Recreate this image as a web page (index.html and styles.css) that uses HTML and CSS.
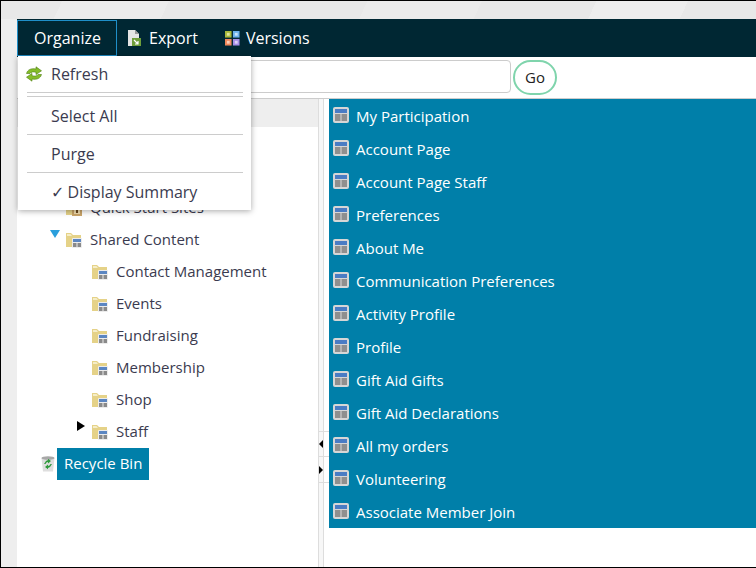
FILE: index.html
```html
<!DOCTYPE html>
<html lang="en">
<head>
    <meta charset="UTF-8">
    <title>Organize</title>
    <link rel="stylesheet" href="styles.css">
</head>
<body>
    <svg class="defs" width="0" height="0">
        <symbol id="page" viewBox="0 0 16 16">
            <rect x="0" y="0" width="16" height="16" rx="2" fill="#d6d6d6"/>
            <rect x="2" y="2" width="12" height="4" fill="#4a7cc4"/>
            <rect x="2" y="7" width="5.500" height="7" fill="#8f8f8f"/>
            <rect x="8.500" y="7" width="5.500" height="7" fill="#8f8f8f"/>
        </symbol>
        <symbol id="folder" viewBox="0 0 16 16">
            <path d="M0 1h5l2 2h8v12H0z" fill="#e5d288"/>
            <path d="M1 2h3.500L6 4H1z" fill="#f5edc8"/>
            <rect x="6" y="6" width="10" height="10" rx="1" fill="#ececec"/>
            <rect x="7" y="7" width="8" height="3" fill="#5b86c2"/>
            <rect x="7" y="11" width="3.500" height="4" fill="#8a8a8a"/>
            <rect x="11.500" y="11" width="3.500" height="4" fill="#8a8a8a"/>
        </symbol>
    </svg>

    <div class="app">
        <div class="top-strip"></div>
        <div class="toolbar">
            <div class="tool tool-active">Organize</div>
            <div class="tool tool-export">
                <svg class="icon-export" viewBox="0 0 13 16">
                    <path d="M0 0h7l4 4v12H0z" fill="#e4e4e4"/>
                    <path d="M7 0l4 4H7z" fill="#9a9a9a"/>
                    <rect x="4" y="8" width="9" height="8" fill="#6f9e3a"/>
                    <path d="M6 10l4 4M10 11v3H7" stroke="#fff" stroke-width="1.200" fill="none"/>
                </svg>
                Export
            </div>
            <div class="tool tool-versions">
                <svg class="icon-versions" viewBox="0 0 16 16">
                    <rect x="0" y="0" width="7" height="7" fill="#a8b83a"/>
                    <rect x="2" y="2" width="3" height="3" fill="#dde5a0"/>
                    <rect x="8.500" y="0" width="7" height="7" fill="#6db2ee"/>
                    <rect x="10.500" y="2" width="3" height="3" fill="#c6e2fa"/>
                    <rect x="0" y="8.500" width="7" height="7" fill="#f0875a"/>
                    <rect x="2" y="10.500" width="3" height="3" fill="#fbd0b8"/>
                    <rect x="8.500" y="8.500" width="7" height="7" fill="#a68ee8"/>
                    <rect x="10.500" y="10.500" width="3" height="3" fill="#dcd2f8"/>
                </svg>
                Versions
            </div>
        </div>

        <div class="search-bar">
            <input class="search-input" type="text">
            <button class="go-btn">Go</button>
        </div>

        <div class="panels">
            <div class="tree">
                <div class="tree-head"></div>
                <div class="tree-body">
                    <div class="tree-row level-1">
                        <svg class="folder" viewBox="0 0 16 16">
                            <path d="M0 1h5l2 2h8v12H0z" fill="#e5d288"/>
                            <rect x="6" y="6" width="10" height="10" fill="#c9a468"/>
                            <rect x="8" y="8" width="6" height="6" fill="#f0dcae"/>
                            <rect x="10" y="9" width="2" height="4" fill="#6b4a1e"/>
                        </svg>
                        Quick Start Sites
                    </div>
                    <div class="tree-row level-1">
                        <span class="arrow-open"></span>
                        <svg class="folder"><use href="#folder"/></svg>
                        Shared Content
                    </div>
                    <div class="tree-row level-2"><svg class="folder"><use href="#folder"/></svg>Contact Management</div>
                    <div class="tree-row level-2"><svg class="folder"><use href="#folder"/></svg>Events</div>
                    <div class="tree-row level-2"><svg class="folder"><use href="#folder"/></svg>Fundraising</div>
                    <div class="tree-row level-2"><svg class="folder"><use href="#folder"/></svg>Membership</div>
                    <div class="tree-row level-2"><svg class="folder"><use href="#folder"/></svg>Shop</div>
                    <div class="tree-row level-2">
                        <span class="arrow-closed"></span>
                        <svg class="folder"><use href="#folder"/></svg>
                        Staff
                    </div>
                    <div class="recycle-row">
                        <svg class="bin" viewBox="0 0 14 16">
                            <path d="M0.500 2h13l-1.500 13.500H2z" fill="#dedede"/>
                            <ellipse cx="7" cy="2" rx="6.500" ry="1.800" fill="#a8a8a8"/>
                            <path d="M3 8L5 5 7 4 7 2.800 10 5 7 7.500 7 6 5.500 6.500 4.500 8z" fill="#2f9a3c"/>
                            <path d="M11 8L9 11 7 12 7 13.200 4 11 7 8.500 7 10 8.500 9.500 9.500 8z" fill="#2f9a3c"/>
                        </svg>
                        <span class="recycle-label">Recycle Bin</span>
                    </div>
                </div>
            </div>

            <div class="splitter">
                <div class="split-cell"><span class="split-left"></span></div>
                <div class="split-cell"><span class="split-right"></span></div>
            </div>

            <div class="list-wrap">
                <div class="list">
                    <div class="list-row"><svg class="page-icon"><use href="#page"/></svg>My Participation</div>
                    <div class="list-row"><svg class="page-icon"><use href="#page"/></svg>Account Page</div>
                    <div class="list-row"><svg class="page-icon"><use href="#page"/></svg>Account Page Staff</div>
                    <div class="list-row"><svg class="page-icon"><use href="#page"/></svg>Preferences</div>
                    <div class="list-row"><svg class="page-icon"><use href="#page"/></svg>About Me</div>
                    <div class="list-row"><svg class="page-icon"><use href="#page"/></svg>Communication Preferences</div>
                    <div class="list-row"><svg class="page-icon"><use href="#page"/></svg>Activity Profile</div>
                    <div class="list-row"><svg class="page-icon"><use href="#page"/></svg>Profile</div>
                    <div class="list-row"><svg class="page-icon"><use href="#page"/></svg>Gift Aid Gifts</div>
                    <div class="list-row"><svg class="page-icon"><use href="#page"/></svg>Gift Aid Declarations</div>
                    <div class="list-row"><svg class="page-icon"><use href="#page"/></svg>All my orders</div>
                    <div class="list-row"><svg class="page-icon"><use href="#page"/></svg>Volunteering</div>
                    <div class="list-row"><svg class="page-icon"><use href="#page"/></svg>Associate Member Join</div>
                </div>
            </div>
        </div>

        <div class="menu">
            <div class="menu-item menu-item-first">
                <svg class="refresh" viewBox="0 0 16 16">
                    <path d="M0.500 7.500C1.500 3.500 5.500 2 10 3L10 .8 15.500 4.800 10 8.600 10 6.300C7 5.500 5 6 4 7.500z" fill="#84bc28" stroke="#4d7d12" stroke-width=".6"/>
                    <path d="M15.500 8.500C14.500 12.500 10.500 14 6 13L6 15.200 .5 11.200 6 7.400 6 9.700C9 10.500 11 10 12 8.500z" fill="#84bc28" stroke="#4d7d12" stroke-width=".6"/>
                </svg>
                Refresh
            </div>
            <div class="menu-sep menu-sep-double"></div>
            <div class="menu-item">Select All</div>
            <div class="menu-sep"></div>
            <div class="menu-item">Purge</div>
            <div class="menu-sep"></div>
            <div class="menu-item"><span class="check">✓</span> Display Summary</div>
        </div>
    </div>
</body>
</html>
```

FILE: styles.css
```css
* {
    box-sizing: border-box;
}
html, body {
    margin: 0;
    height: 100%;
}
body {
    font-family: "Open Sans", sans-serif;
    font-size: 15px;
    color: #3b3b4f;
    overflow: hidden;
}
.defs {
    position: absolute;
}
.app {
    position: relative;
    height: 568px;
    padding-left: 16px;
    border: solid #000;
    border-width: 1px 0 1px 1px;
    background-color: #eee;
    display: flex;
    flex-direction: column;
}
.top-strip {
    height: 18px;
    margin-left: -16px;
    background-color: #e8e8e8;
    background-image:
        linear-gradient(115deg, transparent 8%, #ececec 8%, #ececec 22%, transparent 22%),
        linear-gradient(115deg, transparent 48%, #ebebeb 48%, #ebebeb 63%, transparent 63%),
        linear-gradient(115deg, transparent 78%, #ededed 78%, #ededed 90%, transparent 90%);
}
.toolbar {
    height: 38px;
    background-color: #002733;
    display: flex;
    color: #fff;
    font-size: 16px;
}
.tool {
    display: flex;
    align-items: center;
}
.tool-active {
    width: 100px;
    padding: 0 16px;
    border: 1px solid #1f8fc9;
    margin-top: 1px;
    height: 36px;
}
.tool-export {
    padding: 0 13px 0 11px;
    gap: 8px;
}
.tool-versions {
    padding-left: 14px;
    gap: 6px;
}
.icon-export {
    width: 13px;
    height: 16px;
}
.icon-versions {
    width: 15px;
    height: 15px;
}
.search-bar {
    height: 42px;
    background-color: #fff;
    border-bottom: 1px solid #ccc;
    display: flex;
    align-items: center;
    padding-left: 2px;
    gap: 2px;
}
.search-input {
    width: 492px;
    height: 33px;
    border: 1px solid #ccc;
    border-radius: 4px;
    margin-top: -3px;
}
.go-btn {
    width: 44px;
    height: 35px;
    border: 2px solid #7fd4ac;
    border-radius: 18px;
    background-color: #fff;
    color: #222;
    font-family: inherit;
    font-size: 15px;
    padding: 0;
    margin-top: -1px;
}
.panels {
    flex: 1;
    display: flex;
    background-color: #fff;
    min-height: 0;
}
.tree {
    width: 301px;
}
.tree-head {
    height: 28px;
    background-color: #eee;
}
.tree-body {
    padding-top: 64px;
}
.tree-row {
    height: 32px;
    display: flex;
    align-items: center;
    position: relative;
}
.level-1 {
    padding-left: 49px;
}
.level-2 {
    padding-left: 75px;
}
.folder {
    width: 16px;
    height: 16px;
    margin-right: 8px;
    margin-top: 2px;
}
.arrow-open {
    position: absolute;
    left: 33px;
    top: 7px;
    border-left: 5px solid transparent;
    border-right: 5px solid transparent;
    border-top: 8px solid #2a9fdc;
}
.arrow-closed {
    position: absolute;
    left: 60px;
    top: 6px;
    border-top: 5px solid transparent;
    border-bottom: 5px solid transparent;
    border-left: 8px solid #000;
}
.recycle-row {
    height: 32px;
    display: flex;
    align-items: center;
    padding-left: 24px;
    margin-top: 1px;
}
.bin {
    width: 14px;
    height: 16px;
    margin-right: 2px;
}
.recycle-label {
    height: 32px;
    line-height: 31px;
    padding: 0 7px;
    background-color: #007fa9;
    color: #fff;
}
.splitter {
    width: 11px;
    background: linear-gradient(to right, #ddd 1px, #f7f7f7 1px, #f7f7f7 5px, #ddd 5px, #ddd 6px, #fff 6px);
    padding-top: 332px;
}
.split-cell {
    height: 26px;
    border-bottom: 1px solid #ddd;
    display: flex;
    align-items: center;
    padding-left: 1px;
}
.split-cell:first-child {
    border-top: 1px solid #ddd;
}
.split-left {
    border-top: 4px solid transparent;
    border-bottom: 4px solid transparent;
    border-right: 4px solid #000;
}
.split-right {
    border-top: 4px solid transparent;
    border-bottom: 4px solid transparent;
    border-left: 4px solid #000;
}
.list-wrap {
    flex: 1;
}
.list {
    background-color: #007fa9;
    color: #fff;
}
.list-row {
    height: 33px;
    display: flex;
    align-items: center;
    padding-left: 4px;
}
.page-icon {
    width: 16px;
    height: 16px;
    margin-right: 7px;
    margin-top: -2px;
}
.menu {
    position: absolute;
    left: 17px;
    top: 55px;
    width: 233px;
    height: 154px;
    background-color: #fff;
    box-shadow: 0 1px 6px rgba(0, 0, 0, 0.35);
    padding: 0 8px;
    font-size: 16px;
}
.menu-item {
    height: 37px;
    line-height: 38px;
    padding-left: 25px;
    position: relative;
}
.menu-item-first {
    height: 36px;
    line-height: 36px;
}
.refresh {
    position: absolute;
    left: 0;
    top: 10px;
    width: 16px;
    height: 16px;
}
.menu-sep {
    border-top: 1px solid #ccc;
    margin-left: 1px;
}
.menu-sep-double {
    height: 5px;
    border-bottom: 1px solid #ccc;
}
.check {
    font-family: "DejaVu Sans", sans-serif;
    margin-right: -1px;
}
```
